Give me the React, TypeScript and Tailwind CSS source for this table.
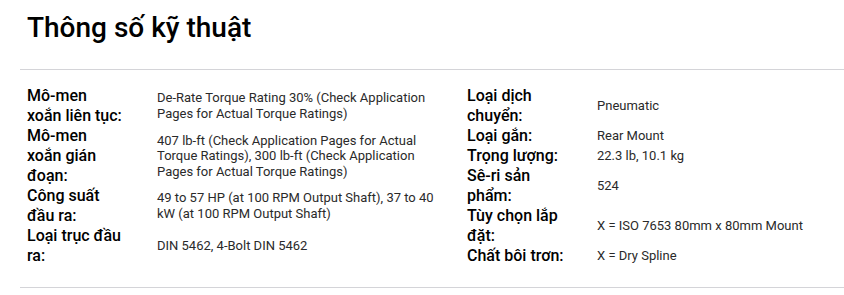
const leftSpecs: [string, string][] = [
  ['Mô-men xoắn liên tục:', 'De-Rate Torque Rating 30% (Check Application Pages for Actual Torque Ratings)'],
  ['Mô-men xoắn gián đoạn:', '407 lb-ft (Check Application Pages for Actual Torque Ratings), 300 lb-ft (Check Application Pages for Actual Torque Ratings)'],
  ['Công suất đầu ra:', '49 to 57 HP (at 100 RPM Output Shaft), 37 to 40 kW (at 100 RPM Output Shaft)'],
  ['Loại trục đầu ra:', 'DIN 5462, 4-Bolt DIN 5462'],
];

const rightSpecs: [string, string][] = [
  ['Loại dịch chuyển:', 'Pneumatic'],
  ['Loại gắn:', 'Rear Mount'],
  ['Trọng lượng:', '22.3 lb, 10.1 kg'],
  ['Sê-ri sản phẩm:', '524'],
  ['Tùy chọn lắp đặt:', 'X = ISO 7653 80mm x 80mm Mount'],
  ['Chất bôi trơn:', 'X = Dry Spline'],
];

function SpecRow({ label, value }: { label: string; value: string }) {
  return (
    <div className="flex items-center">
      <div className="w-[130px] shrink-0 pr-[33px] text-[16px] leading-[20px] font-medium text-black">{label}</div>
      <div className="w-[290px] text-[13px] leading-[15.6px] text-[#2a2a2a]">{value}</div>
    </div>
  );
}

export default function App() {
  return (
    <div className="h-[295px] w-[844px] overflow-hidden bg-white font-['Roboto','Liberation_Sans',sans-serif]">
      <h1 className="pl-[27px] pt-[11px] text-[28px] leading-[33px] font-medium text-black">Thông số kỹ thuật</h1>

      <section className="ml-[20px] mt-[25px] border-y border-[#d4d4d8] pb-[21px] pl-[7px] pt-[16px]">
        <div className="grid grid-cols-[440px_1fr]">
          <div>
            {leftSpecs.map(([label, value]) => (
              <SpecRow key={label} label={label} value={value} />
            ))}
          </div>
          <div>
            {rightSpecs.map(([label, value]) => (
              <SpecRow key={label} label={label} value={value} />
            ))}
          </div>
        </div>
      </section>
    </div>
  );
}
